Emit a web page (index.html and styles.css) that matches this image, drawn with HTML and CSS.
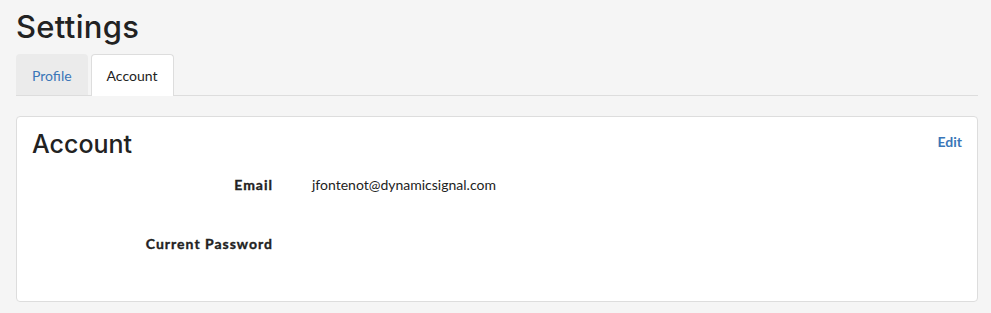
FILE: index.html
```html
<!DOCTYPE html>
<html>
<head>
<meta charset="utf-8">
<link rel="stylesheet" href="styles.css">
</head>
<body>
<div class="page">
  <h1 class="title">Settings</h1>
  <div class="tabs">
    <a class="tab">Profile</a>
    <a class="tab active">Account</a>
  </div>
  <div class="panel">
    <div class="panel-head">
      <h2 class="panel-title">Account</h2>
      <a class="edit">Edit</a>
    </div>
    <div class="row">
      <div class="label">Email</div>
      <div class="value">jfontenot@dynamicsignal.com</div>
    </div>
    <div class="row">
      <div class="label">Current Password</div>
      <div class="value"></div>
    </div>
  </div>
</div>
</body>
</html>
```
FILE: styles.css
```css
html, body {
  margin: 0;
  padding: 0;
  background: #f5f5f5;
  font-family: Lato, "Open Sans", sans-serif;
  color: #222;
}
.page {
  padding: 8px 13px 0 16px;
}
.title {
  margin: 0;
  font-family: Inter, Lato, sans-serif;
  font-size: 31px;
  font-weight: 500;
  line-height: 38px;
  letter-spacing: 0.3px;
  color: #222;
}
.tabs {
  display: flex;
  gap: 3px;
  margin-top: 8px;
  border-bottom: 1px solid #ddd;
  height: 41px;
}
.tab {
  display: flex;
  align-items: center;
  padding: 0 15px;
  font-size: 14px;
  color: #3a76b8;
  background: #ebebeb;
  border: 1px solid transparent;
  border-bottom: none;
  border-radius: 4px 4px 0 0;
  height: 41px;
  box-sizing: border-box;
}
.tab.active {
  background: #fff;
  color: #222;
  border-color: #ddd;
  height: 42px;
  padding: 0 16px 0 15px;
}
.panel {
  margin-top: 20px;
  background: #fff;
  border: 1px solid #ddd;
  border-radius: 4px;
  height: 186px;
  box-sizing: border-box;
  padding: 12px 15px 0 15px;
}
.panel-head {
  display: flex;
  justify-content: space-between;
  align-items: flex-start;
}
.panel-title {
  margin: 0;
  font-family: Inter, Lato, sans-serif;
  font-size: 25px;
  font-weight: 500;
  line-height: 30px;
  color: #222;
}
.edit {
  font-size: 14px;
  font-weight: 700;
  color: #3a76b8;
  margin-top: 4px;
}
.row {
  display: grid;
  grid-template-columns: 240px 1fr;
  column-gap: 40px;
  font-size: 14px;
  line-height: 20px;
  margin-top: 16px;
  height: 43px;
}
.row + .row {
  margin-top: 16px;
}
.label {
  text-align: right;
  font-weight: 700;
  letter-spacing: 1px;
  margin-right: -1px;
  -webkit-text-stroke: 0.35px #222;
}
.value {
  color: #222;
}
```
